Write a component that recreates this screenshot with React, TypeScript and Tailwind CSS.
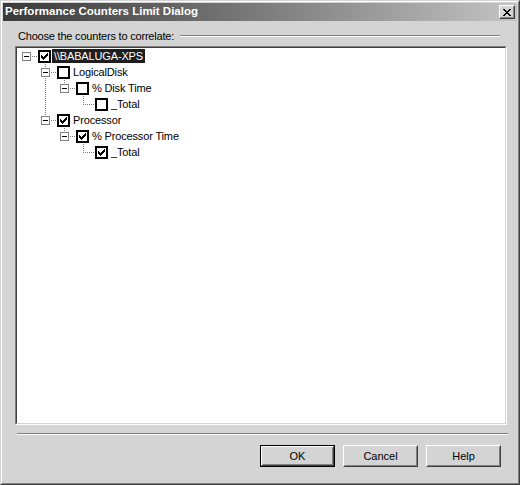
import React from "react";

type TreeRow = {
  label: string;
  level: number;
  checked: boolean;
  expandable: boolean;
  selected?: boolean;
  hasParent: boolean;
  hasNext: boolean;
  pass: number[];
};

const rows: TreeRow[] = [
  { label: "\\\\BABALUGA-XPS", level: 0, checked: true, expandable: true, selected: true, hasParent: false, hasNext: false, pass: [] },
  { label: "LogicalDisk", level: 1, checked: false, expandable: true, hasParent: true, hasNext: true, pass: [] },
  { label: "% Disk Time", level: 2, checked: false, expandable: true, hasParent: true, hasNext: false, pass: [1] },
  { label: "_Total", level: 3, checked: false, expandable: false, hasParent: true, hasNext: false, pass: [1] },
  { label: "Processor", level: 1, checked: true, expandable: true, hasParent: true, hasNext: false, pass: [] },
  { label: "% Processor Time", level: 2, checked: true, expandable: true, hasParent: true, hasNext: false, pass: [] },
  { label: "_Total", level: 3, checked: true, expandable: false, hasParent: true, hasNext: false, pass: [] },
];

const colX = (level: number) => 9 + 19 * level;

// dotted tree lines, one pixel on one off
const dots = (x0: number, y0: number, x1: number, y1: number, key: string) => {
  const out: React.ReactElement[] = [];
  if (x0 === x1) {
    for (let y = y0; y <= y1; y += 2) out.push(<rect key={key + y} x={x0} y={y} width={1} height={1} fill="#808080" />);
  } else {
    for (let x = x0; x <= x1; x += 2) out.push(<rect key={key + x} x={x} y={y0} width={1} height={1} fill="#808080" />);
  }
  return out;
};

const Connector = ({ row }: { row: TreeRow }) => {
  const cx = colX(row.level);
  const w = cx + 12;
  return (
    <svg width={w} height={16} className="shrink-0" shapeRendering="crispEdges">
      {row.pass.map((l) => dots(colX(l), 0, colX(l), 15, "p" + l))}
      {row.expandable ? (
        <>
          {row.hasParent && dots(cx, 0, cx, 3, "a")}
          {row.hasNext && dots(cx, 14, cx, 15, "b")}
          {dots(cx + 6, 8, cx + 10, 8, "h")}
          <rect x={cx - 4 + 0.5} y={4.5} width={8} height={8} fill="#fff" stroke="#808080" />
          <rect x={cx - 2} y={8} width={5} height={1} fill="#000" />
        </>
      ) : (
        <>
          {dots(cx, 0, cx, 8, "v")}
          {dots(cx + 2, 8, cx + 10, 8, "h")}
          {row.hasNext && dots(cx, 10, cx, 15, "b")}
        </>
      )}
    </svg>
  );
};

const checkCols = [2, 3, 4, 3, 2, 1, 0];

const CheckBox = ({ checked }: { checked: boolean }) => (
  <div className="w-[13px] h-[13px] shrink-0 border-2 border-black bg-white relative">
    {checked && (
      <svg width={9} height={9} className="absolute left-0 top-0" shapeRendering="crispEdges">
        {checkCols.map((y, i) => (
          <rect key={i} x={1 + i} y={1 + y} width={1} height={3} fill="#000" />
        ))}
      </svg>
    )}
  </div>
);

const closePix = [
  "XX....XX",
  ".XX..XX.",
  "..XXXX..",
  "...XX...",
  "..XXXX..",
  ".XX..XX.",
  "XX....XX",
];

const CloseButton = () => (
  <div className="w-[16px] h-[14px] border border-t-white border-l-white border-r-[#404040] border-b-[#404040] bg-[#d4d4d4]">
    <div className="h-full border border-t-[#d4d4d4] border-l-[#d4d4d4] border-r-[#808080] border-b-[#808080] flex items-center justify-center">
      <svg width={8} height={7} shapeRendering="crispEdges">
        {closePix.map((line, y) =>
          line.split("").map((c, x) =>
            c === "X" ? <rect key={x + "-" + y} x={x} y={y} width={1} height={1} fill="#000" /> : null
          )
        )}
      </svg>
    </div>
  </div>
);

const Button = ({ text, isDefault }: { text: string; isDefault?: boolean }) => {
  const face = (
    <div className="h-full border border-t-white border-l-white border-r-[#404040] border-b-[#404040]">
      <div className="h-full border border-t-[#d4d4d4] border-l-[#d4d4d4] border-r-[#808080] border-b-[#808080] flex items-center justify-center text-[11px] text-black">
        {text}
      </div>
    </div>
  );
  return (
    <div className={"w-[75px] h-[22px] bg-[#d4d4d4] " + (isDefault ? "border border-black" : "")}>
      {face}
    </div>
  );
};

const App = () => {
  return (
    <div className="w-[520px] h-[485px] bg-[#d4d4d4] border border-t-[#d4d4d4] border-l-[#d4d4d4] border-r-[#404040] border-b-[#404040] font-['Liberation_Sans',Arial,sans-serif] select-none">
      <div className="h-full border border-t-white border-l-white border-r-[#808080] border-b-[#808080] p-px flex flex-col">
        {/* title bar */}
        <div className="h-[18px] flex items-center justify-between pl-[2px] pr-[2px] bg-gradient-to-r from-[#3a3a3a] to-[#c4c4c4]">
          <span className="text-white font-bold text-[11.5px] leading-none">Performance Counters Limit Dialog</span>
          <CloseButton />
        </div>

        {/* group label */}
        <div className="mt-[8px] h-[14px] flex items-center pl-[15px] pr-[17px]">
          <span className="text-[11px] tracking-[-0.2px] text-black leading-none">Choose the counters to correlate:</span>
          <div className="flex-1 ml-[6px] flex flex-col">
            <div className="h-px bg-[#808080]" />
            <div className="h-px bg-white" />
          </div>
        </div>

        {/* tree */}
        <div className="mt-[3px] ml-[12px] w-[492px] h-[379px] border border-t-[#808080] border-l-[#808080] border-r-white border-b-white">
          <div className="h-full border border-t-[#404040] border-l-[#404040] border-r-[#d4d4d4] border-b-[#d4d4d4] bg-white">
            {rows.map((row, i) => (
              <div key={i} className="h-[16px] flex items-center">
                <Connector row={row} />
                <CheckBox checked={row.checked} />
                <span
                  className={
                    "ml-px h-[14px] px-[2px] flex items-center text-[11px] tracking-[-0.15px] leading-none whitespace-nowrap " +
                    (row.selected ? "bg-[#1e1e1e] text-white" : "text-black")
                  }
                >
                  {row.label}
                </span>
              </div>
            ))}
          </div>
        </div>

        {/* separator */}
        <div className="mt-[8px] ml-[14px] mr-[9px]">
          <div className="h-px bg-[#808080]" />
          <div className="h-px bg-white" />
        </div>

        {/* buttons */}
        <div className="mt-[10px] flex justify-end gap-[8px] pr-[16px]">
          <Button text="OK" isDefault />
          <Button text="Cancel" />
          <Button text="Help" />
        </div>
      </div>
    </div>
  );
};

export default App;
